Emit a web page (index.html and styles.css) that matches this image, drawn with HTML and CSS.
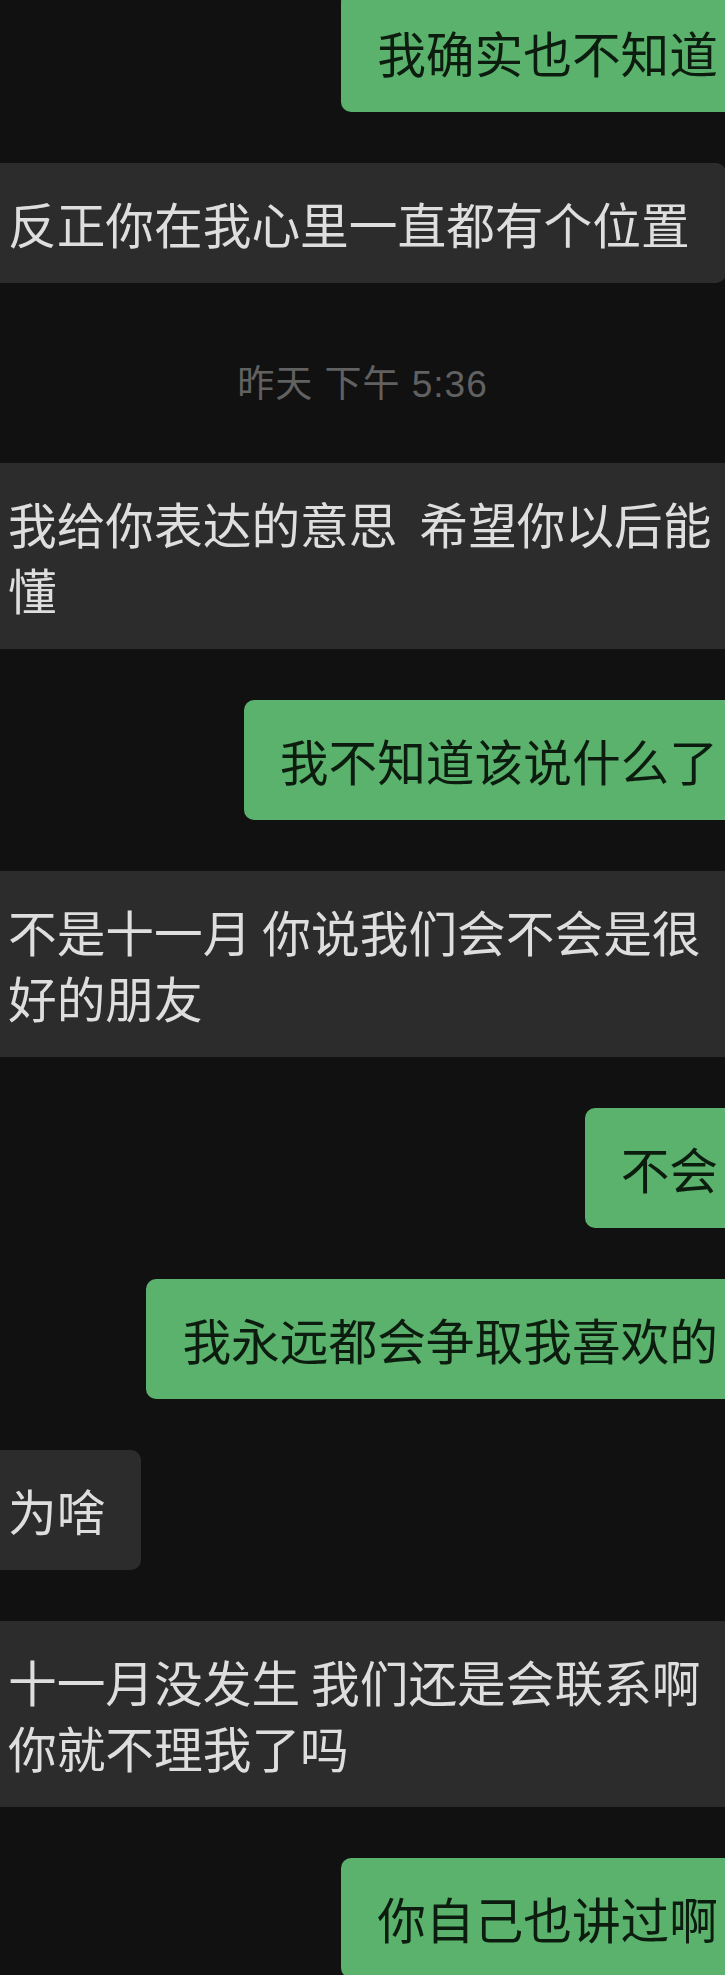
FILE: index.html
```html
<!DOCTYPE html>
<html lang="zh-CN">
<head>
    <meta charset="UTF-8">
    <meta name="viewport" content="width=device-width, initial-scale=1.0">
    <title>聊天记录</title>
    <link rel="stylesheet" href="styles.css">
</head>
<body>
    <div class="chat">
        <div class="msg msg-me first">我确实也不知道</div>
        <div class="msg msg-other">反正你在我心里一直都有个位置</div>

        <div class="time">昨天 下午 5:36</div>

        <div class="msg msg-other">我给你表达的意思  希望你以后能懂</div>
        <div class="msg msg-me">我不知道该说什么了</div>
        <div class="msg msg-other">不是十一月 你说我们会不会是很好的朋友</div>
        <div class="msg msg-me">不会</div>
        <div class="msg msg-me">我永远都会争取我喜欢的</div>
        <div class="msg msg-other">为啥</div>
        <div class="msg msg-other">十一月没发生 我们还是会联系啊你就不理我了吗</div>
        <div class="msg msg-me">你自己也讲过啊</div>
    </div>
</body>
</html>
```

FILE: styles.css
```css
html, body {
    margin: 0;
    padding: 0;
    background-color: #111111;
    overflow: hidden; /* screenshot is a crop, bubbles run off both edges */
}

body {
    font-family: "Noto Sans CJK SC", "Noto Sans", sans-serif;
}

.chat {
    display: flex;
    flex-direction: column;
    gap: 51px;
    width: 725px;
}

.msg {
    width: max-content;
    max-width: 712px;
    padding: 27px 36px;
    font-size: 48.7px;
    line-height: 66px;
    border-radius: 10px;
    white-space: pre-wrap;
    word-break: break-all;
}

.msg.first {
    margin-top: -8px;
}

/* left side, friend */
.msg-other {
    align-self: flex-start;
    margin-left: -28px;
    background-color: #2c2c2c;
    color: #dedede;
}

/* right side, me */
.msg-me {
    align-self: flex-end;
    margin-right: -29px;
    background-color: #5ab26d;
    color: #0c1d0f;
}

.time {
    align-self: center;
    margin: 26px 0 2px;
    font-family: "Liberation Sans", "Noto Sans CJK SC", sans-serif;
    font-size: 37px;
    line-height: 50px;
    letter-spacing: 1px;
    color: #616161;
}
```
